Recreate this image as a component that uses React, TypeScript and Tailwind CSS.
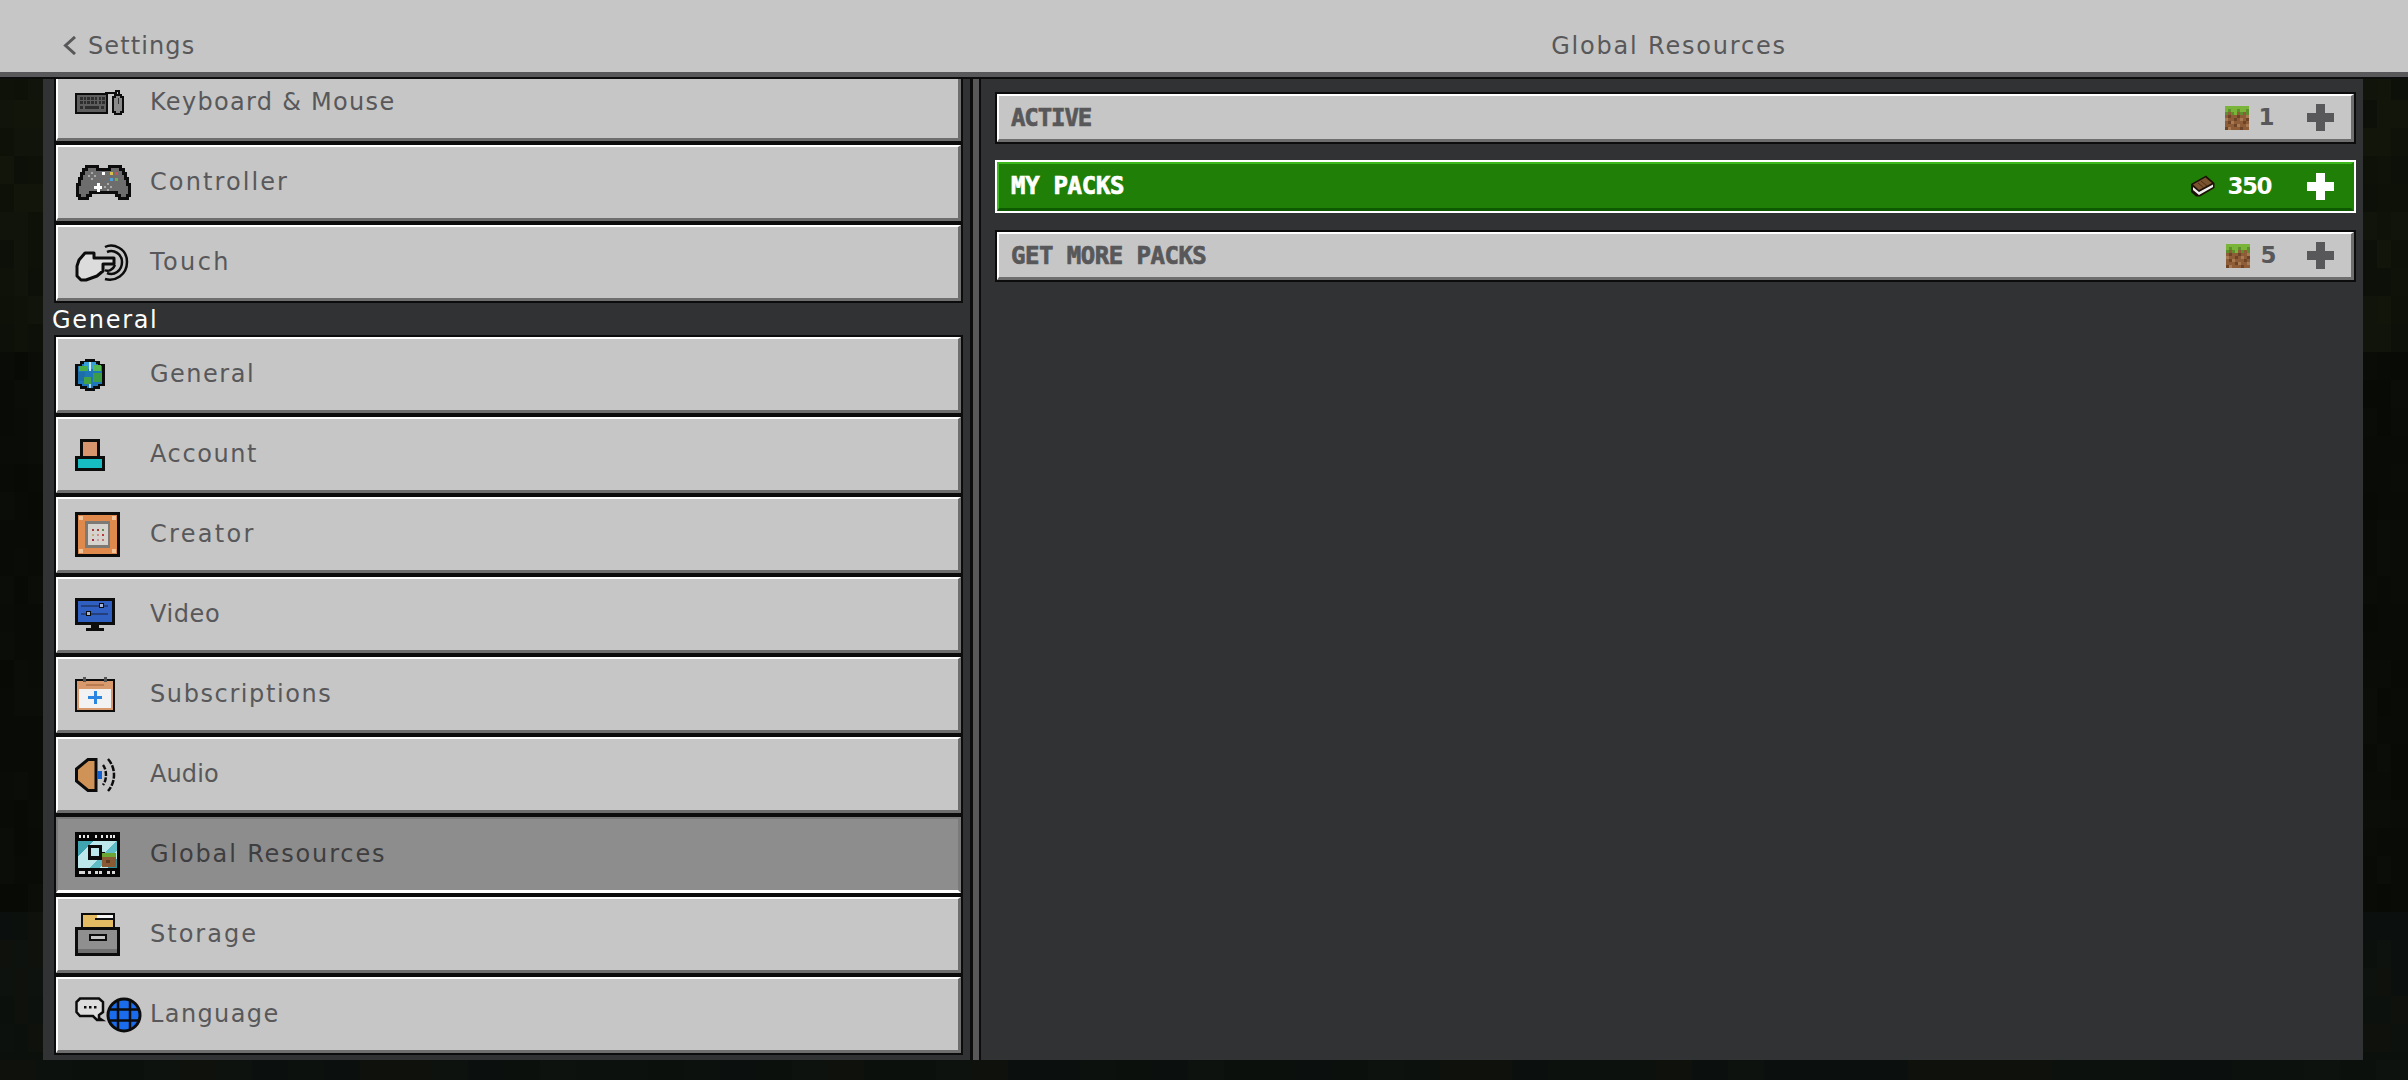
import React from "react";

const INK = "#0c0c0c";

function Keyboard() {
  const keys: React.ReactNode[] = [];
  for (let r = 0; r < 2; r++) for (let c = 0; c < 7; c++) keys.push(<rect key={`${r}-${c}`} x={5 + c * 3.7} y={7 + r * 4} width={2.5} height={2.5} fill="#2e2e2e" />);
  return (
    <svg width="50" height="25" viewBox="0 0 50 25" shapeRendering="crispEdges">
      <rect x="0" y="3" width="33" height="21" fill={INK} />
      <rect x="2" y="5" width="29" height="17" fill="#5e5e5e" />
      {keys}
      <rect x="5" y="16" width="3" height="3" fill="#2e2e2e" />
      <rect x="10" y="16" width="14" height="3" fill="#2e2e2e" />
      <rect x="26" y="16" width="3" height="3" fill="#2e2e2e" />
      <path d="M31 5 V3 H41 V1 H44 V5" fill="none" stroke={INK} strokeWidth="2" />
      <path d="M38 7 H40 V5 H46 V7 H48 V22 H46 V24 H40 V22 H38 Z" fill="#8a8a8a" stroke={INK} strokeWidth="2.5" />
      <rect x="42.5" y="8" width="1.5" height="6" fill="#333" />
    </svg>
  );
}

function Controller() {
  const diamond = (x: number, y: number) => (
    <g fill="#a8a8a8">
      <rect x={x - 1} y={y - 4} width="2" height="2" />
      <rect x={x - 1} y={y + 2} width="2" height="2" />
      <rect x={x - 4} y={y - 1} width="2" height="2" />
      <rect x={x + 2} y={y - 1} width="2" height="2" />
    </g>
  );
  return (
    <svg width="56" height="37" viewBox="0 0 56 37" shapeRendering="crispEdges">
      <path d="M11 2 H22 V5 H34 V2 H45 V5 H48 V9 H50 V14 H52 V20 H54 V31 H52 V34 H44 V31 H41 V28 H15 V31 H12 V34 H4 V31 H2 V20 H4 V14 H6 V9 H8 V5 H11 Z" fill="#6d6d6d" stroke={INK} strokeWidth="3" />
      {diamond(17, 12)}
      {diamond(33, 23)}
      <rect x="19" y="22" width="8" height="3" fill="#fff" />
      <rect x="21.5" y="19" width="3" height="9" fill="#fff" />
      <rect x="27" y="8" width="3" height="3" fill="#fff" />
      <rect x="35" y="8" width="3" height="3" fill="#d8c050" />
      <rect x="40" y="8" width="3" height="3" fill="#c8505a" />
      <rect x="35" y="14" width="3" height="3" fill="#4f9fd8" />
      <rect x="40" y="14" width="3" height="3" fill="#72a85a" />
    </svg>
  );
}

function Touch() {
  return (
    <svg width="54" height="38" viewBox="0 0 54 38">
      <path d="M30 3 C38 -1 52 4 52 18 C52 31 40 38 30 35" fill="none" stroke={INK} strokeWidth="2.5" />
      <path d="M32 8 C39 5 47 10 47 18 C47 27 39 32 32 29" fill="none" stroke={INK} strokeWidth="2.5" />
      <path d="M30 26 C33 28 38 26 40 21" fill="none" stroke={INK} strokeWidth="2.5" />
      <path d="M2 22 L4 16 L10 9 H19 V14 H39 V20 H28 V27 L22 32 L11 36 H6 L2 32 Z" fill="#dcdcdc" stroke={INK} strokeWidth="3" strokeLinejoin="round" />
    </svg>
  );
}

function Globe() {
  return (
    <svg width="30" height="32" viewBox="0 0 30 32" shapeRendering="crispEdges">
      <path d="M11 1.5 H19 V3.5 H24 V6 H28.5 V26 H24 V28.5 H19 V30.5 H11 V28.5 H6 V26 H1.5 V6 H6 V3.5 H11 Z" fill="#1d77b8" stroke={INK} strokeWidth="2.5" />
      <rect x="9" y="3" width="12" height="7" fill="#35a0d8" />
      <rect x="4" y="7" width="9" height="5" fill="#48ad44" />
      <rect x="18" y="6" width="8" height="6" fill="#54b850" />
      <rect x="3" y="13" width="7" height="9" fill="#1b6ea8" />
      <rect x="18" y="14" width="9" height="9" fill="#3d9c46" />
      <rect x="9" y="18" width="7" height="7" fill="#43a146" />
      <rect x="14" y="3" width="2" height="9" fill="#cbeaf8" />
      <rect x="14" y="25" width="2" height="4" fill="#a8d4ec" />
    </svg>
  );
}

function Account() {
  return (
    <svg width="30" height="32" viewBox="0 0 30 32" shapeRendering="crispEdges">
      <rect x="5" y="0" width="20" height="20" fill={INK} />
      <rect x="8" y="3" width="14" height="14" fill="#d8946c" />
      <rect x="0" y="17" width="30" height="15" fill={INK} />
      <rect x="3" y="20" width="24" height="9" fill="#16bcc2" />
    </svg>
  );
}

function Creator() {
  const dots: [number, number, string][] = [
    [17, 17, "#a83a3a"], [22, 17, "#a83a3a"], [27, 17, "#5c8a50"],
    [17, 22, "#c9a878"], [22, 22, "#c98a8a"], [27, 22, "#b83a3a"],
    [17, 27, "#a82a3a"], [22, 27, "#c8a0a0"], [27, 27, "#c07070"],
  ];
  return (
    <svg width="45" height="45" viewBox="0 0 45 45" shapeRendering="crispEdges">
      <rect width="45" height="45" fill={INK} />
      <rect x="3" y="3" width="39" height="39" fill="#df8a4c" />
      <rect x="4" y="4" width="4" height="4" fill="#f0c49a" />
      <rect x="37" y="4" width="4" height="4" fill="#f0c49a" />
      <rect x="4" y="37" width="4" height="4" fill="#f0c49a" />
      <rect x="37" y="37" width="4" height="4" fill="#f0c49a" />
      <rect x="10" y="9" width="25" height="27" fill="#7d7a76" />
      <rect x="13" y="12" width="20" height="21" fill="#d6d3ce" />
      {dots.map(([x, y, c], i) => <rect key={i} x={x} y={y} width="2" height="2" fill={c} />)}
    </svg>
  );
}

function Video() {
  return (
    <svg width="40" height="33" viewBox="0 0 40 33" shapeRendering="crispEdges">
      <rect width="40" height="27" fill={INK} />
      <rect x="3" y="3" width="34" height="21" fill="#2f5fc0" />
      <rect x="6" y="7" width="27" height="2" fill="#24407c" />
      <rect x="6" y="15" width="27" height="2" fill="#24407c" />
      <rect x="24" y="5" width="5" height="5" fill={INK} />
      <rect x="25" y="6" width="3" height="3" fill="#9fb4d8" />
      <rect x="11" y="13" width="5" height="5" fill={INK} />
      <rect x="12" y="14" width="3" height="3" fill="#9fb4d8" />
      <rect x="16" y="27" width="8" height="3" fill={INK} />
      <rect x="11" y="30" width="18" height="3" fill={INK} />
    </svg>
  );
}

function Subscriptions() {
  return (
    <svg width="40" height="35" viewBox="0 0 40 35" shapeRendering="crispEdges">
      <rect y="2" width="40" height="33" fill={INK} />
      <rect x="2" y="4" width="36" height="29" fill="#d89a6c" />
      <rect x="4" y="12" width="32" height="19" fill="#f2f2f2" />
      <rect x="11" y="7" width="18" height="2" fill="#b87c50" />
      <rect x="8" y="0" width="3" height="5" fill="#555" />
      <rect x="29" y="0" width="3" height="5" fill="#555" />
      <rect x="13" y="19" width="14" height="3" fill="#2a86e0" />
      <rect x="18.5" y="14" width="3" height="13" fill="#2a86e0" />
    </svg>
  );
}

function Audio() {
  return (
    <svg width="44" height="34" viewBox="0 0 44 34">
      <path d="M1.5 11 L13 1.5 H21 V32.5 H13 L1.5 23 Z" fill="#cf9358" stroke={INK} strokeWidth="3" strokeLinejoin="miter" />
      <rect x="22" y="13" width="5" height="8" fill="#1560d0" />
      <path d="M28 7 C32 12 32 22 28 27" fill="none" stroke={INK} strokeWidth="2.5" strokeDasharray="5 1.5" />
      <path d="M33 1 C41 10 41 24 33 33" fill="none" stroke={INK} strokeWidth="2.5" strokeDasharray="6 1.5" />
    </svg>
  );
}

function Grass({ size = 24 }: { size?: number }) {
  const rows = [
    "GGGGGGGG",
    "GgGGgGGg",
    "gDgGDgDg",
    "DdDDdDDL",
    "LDDdDLDd",
    "DdLDDDdD",
    "DDDdLDDL",
    "dLDDDdDD",
  ];
  const m: Record<string, string> = { G: "#7ab53a", g: "#5d8f2c", D: "#8f5c38", d: "#6d4428", L: "#a87a52" };
  return (
    <svg width={size} height={size} viewBox="0 0 8 8" shapeRendering="crispEdges">
      {rows.flatMap((r, y) => r.split("").map((c, x) => <rect key={`${x}-${y}`} x={x} y={y} width="1" height="1" fill={m[c]} />))}
    </svg>
  );
}

function GlobalRes() {
  return (
    <svg width="45" height="45" viewBox="0 0 45 45" shapeRendering="crispEdges">
      <rect width="45" height="45" fill="#060606" />
      <rect x="3" y="9" width="39" height="27" fill="#bce8ec" />
      <path d="M3 9 H18 L3 24 Z" fill="#3fa3b0" />
      <path d="M42 9 V18 L24 36 H14 Z" fill="#5dbcc6" />
      <path d="M42 26 V36 H32 Z" fill="#2f8f9c" />
      <rect x="13" y="13" width="14" height="15" fill="#0b0b0b" />
      <rect x="16" y="16" width="8" height="8" fill="#bce8ec" />
      <rect x="27" y="20" width="3" height="3" fill="#0b0b0b" />
      <rect x="27" y="21" width="14" height="14" fill="#8a5a34" />
      <rect x="27" y="21" width="14" height="4" fill="#6ba534" />
      <rect x="31" y="28" width="4" height="3" fill="#5d3a20" />
      {[4, 8, 12, 20, 26, 31, 35, 38].map((x) => <rect key={x} x={x} y="3" width="2" height="3" fill="#e8e8e8" />)}
      {[4, 7, 13, 20, 24, 32, 37].map((x) => <rect key={x} x={x} y="39" width="3" height="3" fill="#d8d8d8" />)}
    </svg>
  );
}

function Storage() {
  return (
    <svg width="45" height="43" viewBox="0 0 45 43" shapeRendering="crispEdges">
      <rect x="6" y="0" width="34" height="16" fill={INK} />
      <rect x="8" y="2" width="30" height="14" fill="#e2bb62" />
      <rect x="22" y="2" width="16" height="3" fill="#f5f5f5" />
      <rect x="20" y="5" width="20" height="2" fill={INK} />
      <rect x="0" y="14" width="45" height="29" fill={INK} />
      <rect x="3" y="17" width="39" height="23" fill="#8f8f8f" />
      <rect x="3" y="36" width="39" height="4" fill="#6f6f6f" />
      <rect x="14" y="21" width="18" height="7" fill={INK} />
      <rect x="16" y="23" width="14" height="3" fill="#c4c4c4" />
    </svg>
  );
}

function Language() {
  return (
    <svg width="67" height="36" viewBox="0 0 67 36">
      <path d="M5 1.5 H24 L28 5 V15 L24 18 V21 L27 23 H22 L18 19 H5 L1.5 15 V5 Z" fill="#dedede" stroke={INK} strokeWidth="2.5" />
      <g fill={INK}>
        <rect x="9" y="9" width="2.5" height="2.5" />
        <rect x="14" y="9" width="2.5" height="2.5" />
        <rect x="19" y="9" width="2.5" height="2.5" />
      </g>
      <circle cx="49" cy="18" r="16" fill="#1a6cec" stroke={INK} strokeWidth="3" />
      <path d="M34 12.5 H64 M34 23.5 H64 M43 3 V33 M55 3 V33" stroke={INK} strokeWidth="2.5" fill="none" />
    </svg>
  );
}

function Book() {
  return (
    <svg width="25" height="22" viewBox="0 0 25 22">
      <path d="M1 9 L16 0.5 L24.5 8 V13 L10 21.5 H6 L1 17 Z" fill="#1d1006" />
      <path d="M3 9.5 L15.5 2.5 L22 8 L9 15 Z" fill="#7a5230" />
      <path d="M3 12 L9 17 L23 9.5 V12 L9 20 L3 15 Z" fill="#f0f0f0" />
      <path d="M8 8 L14 13 M11 6 L17 11" stroke="#4a2f15" strokeWidth="1" />
    </svg>
  );
}

function Plus({ white }: { white?: boolean }) {
  return (
    <span className="relative block h-[27px] w-[27px]">
      <span className={`absolute left-[9px] top-0 h-[27px] w-[9px] ${white ? "bg-white" : "bg-[#58585a]"}`} />
      <span className={`absolute left-0 top-[9px] h-[9px] w-[27px] ${white ? "bg-white" : "bg-[#58585a]"}`} />
    </span>
  );
}

type Row = { label: string; icon: React.ReactNode; selected?: boolean; track: string; clip?: boolean };

const top: Row[] = [
  { label: "Keyboard & Mouse", icon: <Keyboard />, track: "tracking-[1.3px]", clip: true },
  { label: "Controller", icon: <Controller />, track: "tracking-[2.1px]" },
  { label: "Touch", icon: <Touch />, track: "tracking-[2.4px]" },
];
const general: Row[] = [
  { label: "General", icon: <Globe />, track: "tracking-[1.5px]" },
  { label: "Account", icon: <Account />, track: "tracking-[1.6px]" },
  { label: "Creator", icon: <Creator />, track: "tracking-[2.3px]" },
  { label: "Video", icon: <Video />, track: "tracking-[0.6px]" },
  { label: "Subscriptions", icon: <Subscriptions />, track: "tracking-[1.6px]" },
  { label: "Audio", icon: <Audio />, track: "tracking-[0.1px]" },
  { label: "Global Resources", icon: <GlobalRes />, selected: true, track: "tracking-[1.85px]" },
  { label: "Storage", icon: <Storage />, track: "tracking-[2px]" },
  { label: "Language", icon: <Language />, track: "tracking-[1.4px]" },
];

function SideRow({ r }: { r: Row }) {
  return (
    <div className={`h-[80px] w-[909px] shrink-0 border-y-2 border-x-2 border-[#0c0c0c] ${r.clip ? "-mt-[16px]" : ""}`}>
      <div
        className={`flex h-full items-center border-l-2 border-r-[3px] pl-[17px] ${
          r.selected
            ? "border-t-2 border-b-[3px] border-t-[#7a7a7a] border-l-[#7a7a7a] border-r-[#7a7a7a] border-b-white bg-[#8d8d8d]"
            : "border-t-2 border-b-[3px] border-t-white border-l-white border-r-[#6e6e6e] border-b-[#6e6e6e] bg-[#c6c6c6]"
        }`}
      >
        <span className="flex w-[75px] shrink-0 items-center">{r.icon}</span>
        <span className={`-mt-[1px] whitespace-nowrap font-['DejaVu_Sans',sans-serif] text-[24px] leading-none ${r.selected ? "text-[#3e3e40]" : "text-[#58585a]"} ${r.track}`}>{r.label}</span>
      </div>
    </div>
  );
}

function PackRow({ label, right, active, cls, track }: { label: string; right: React.ReactNode; active?: boolean; cls: string; track: string }) {
  return (
    <div className={`w-[1361px] border-2 ${active ? "border-white" : "border-[#0c0c0c]"} ${cls}`}>
      <div
        className={`flex h-full items-center justify-between border-t-2 border-l-2 border-b-[3px] border-r-[3px] pl-[12px] pr-[17px] ${
          active
            ? "border-t-[#3cb81e] border-l-[#3cb81e] border-b-[#0e5a00] border-r-[#1e7f05] bg-[#207f06]"
            : "border-t-white border-l-white border-b-[#6e6e6e] border-r-[#6e6e6e] bg-[#c6c6c6]"
        }`}
      >
        <span className={`whitespace-nowrap font-['DejaVu_Sans_Mono',monospace] text-[24px] font-bold leading-none [-webkit-text-stroke:0.7px_currentColor] ${track} ${active ? "text-white" : "text-[#58585a]"}`}>{label}</span>
        {right}
      </div>
    </div>
  );
}

function Count({ icon, n, white, gap }: { icon: React.ReactNode; n: string; white?: boolean; gap: string }) {
  return (
    <span className="flex items-center">
      <span className="flex">{icon}</span>
      <span className={`whitespace-nowrap font-['DejaVu_Sans',sans-serif] text-[23px] font-bold leading-none tracking-[-1.5px] ${white ? "text-white" : "text-[#58585a]"} ${gap}`}>{n}</span>
      <Plus white={white} />
    </span>
  );
}

function Backdrop() {
  const cells: React.ReactNode[] = [];
  let seed = 7;
  const rnd = () => {
    seed = (seed * 16807) % 2147483647;
    return seed / 2147483647;
  };
  const pal = (y: number) => {
    if (y < 330) return ["#0e1209", "#10140a", "#0c1008", "#11150a", "#0d1108"];
    if (y < 900) return ["#090b07", "#0a0c07", "#080a06", "#0b0d08", "#090b07"];
    return ["#0b100d", "#0d120e", "#0b0f0e", "#0f120c", "#0c110e"];
  };
  for (let y = 72; y < 1080; y += 28) {
    for (const x0 of [0, 14, 28, 2363, 2377, 2391]) {
      const p = pal(y);
      cells.push(<rect key={`${x0}-${y}`} x={x0} y={y} width="17" height="28" fill={p[Math.floor(rnd() * p.length)]} />);
    }
  }
  for (let x = 0; x < 2408; x += 36) {
    const p = pal(1000);
    cells.push(<rect key={`b-${x}`} x={x} y={1060} width="36" height="20" fill={p[Math.floor(rnd() * p.length)]} />);
  }
  return (
    <svg className="absolute inset-0 -z-10" width="2408" height="1080" shapeRendering="crispEdges">
      <rect width="2408" height="1080" fill="#0b0e09" />
      {cells}
    </svg>
  );
}

export default function App() {
  return (
    <div className="relative isolate flex h-[1080px] w-[2408px] flex-col overflow-hidden">
      <Backdrop />
      <header className="flex h-[79px] shrink-0 items-center border-b-2 border-[#0c0c0c] bg-[#c6c6c6] pt-[14px] shadow-[inset_0_-5px_0_#58585a]">
        <div className="flex w-[981px] shrink-0 items-center pl-[63px]">
          <svg width="13" height="19" viewBox="0 0 13 19" fill="none" stroke="#58585a" strokeWidth="3">
            <path d="M12 1 L2.5 9.5 L12 18" />
          </svg>
          <span className="ml-[12px] font-['DejaVu_Sans',sans-serif] text-[24px] leading-none tracking-[1.1px] text-[#58585a]">Settings</span>
        </div>
        <div className="w-[1376px] text-center font-['DejaVu_Sans',sans-serif] text-[24px] leading-none tracking-[1.8px] text-[#58585a]">Global Resources</div>
      </header>
      <main className="flex h-[981px] shrink-0 pl-[43px]">
        <section className="h-full w-[927px] shrink-0 overflow-hidden bg-[#313233] pl-[11px]">
          {top.map((r) => <SideRow key={r.label} r={r} />)}
          <div className="flex h-[32px] items-center pt-[1px] text-[24px] leading-none">
            <span className="-ml-[2px] font-['DejaVu_Sans',sans-serif] tracking-[1.7px] text-white">General</span>
          </div>
          {general.map((r) => <SideRow key={r.label} r={r} />)}
        </section>
        <div className="h-full w-[11px] shrink-0 border-x-[3px] border-[#0c0c0c] border-r-2 bg-[#58585a]" />
        <section className="flex h-full w-[1382px] shrink-0 flex-col bg-[#313233] pl-[14px]">
          <PackRow cls="mt-[13px] h-[52px]" label="ACTIVE" track="tracking-[-1.1px]" right={<Count icon={<Grass />} n="1" gap="ml-[9px] mr-[34px]" />} />
          <PackRow cls="mt-[16px] h-[53px]" active label="MY PACKS" track="tracking-[-0.3px]" right={<Count icon={<Book />} n="350" gap="ml-[12px] mr-[36px]" white />} />
          <PackRow cls="mt-[17px] h-[52px]" label="GET MORE PACKS" track="tracking-[-0.5px]" right={<Count icon={<Grass />} n="5" gap="ml-[10px] mr-[32px]" />} />
        </section>
      </main>
    </div>
  );
}
